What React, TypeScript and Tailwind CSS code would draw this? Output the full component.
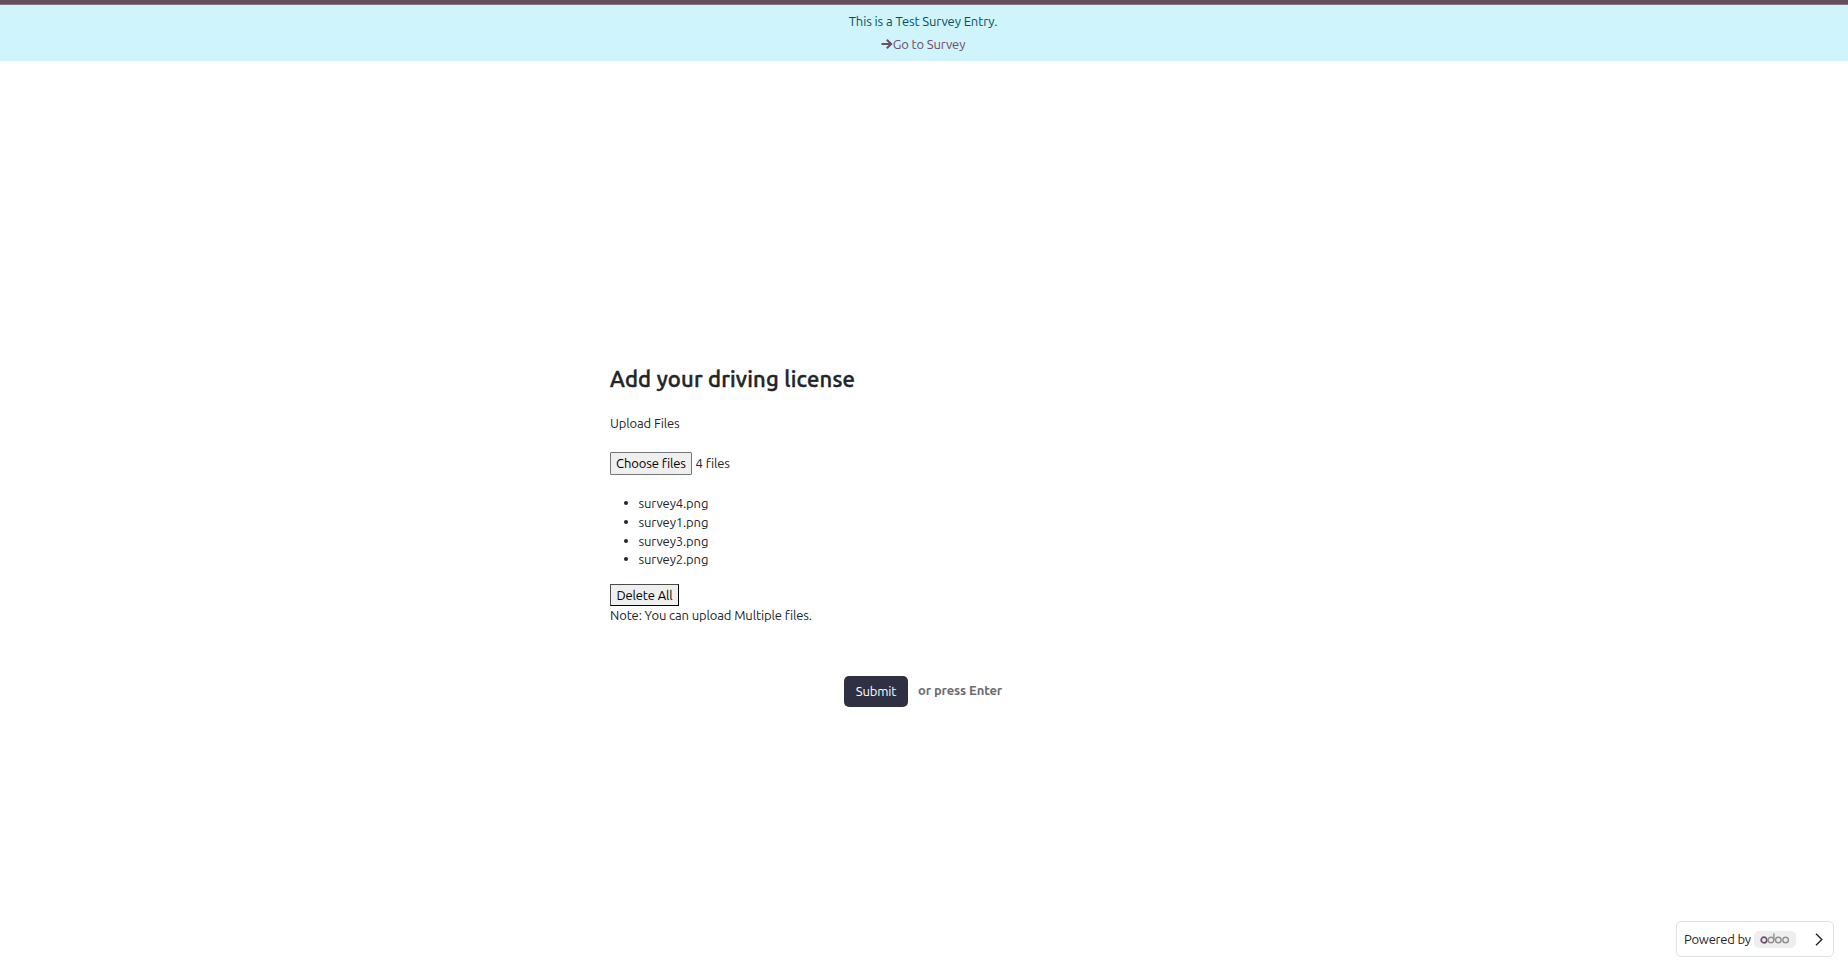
import React from "react";

const files = ["survey4.png", "survey1.png", "survey3.png", "survey2.png"];

function OdooLogo() {
  return (
    <svg width="30" height="11" viewBox="0 0 30 11" fill="none" strokeWidth="1.7">
      <circle cx="4" cy="7" r="2.8" stroke="#714b67" />
      <g stroke="#8f8f8f" strokeWidth="1.4">
        <circle cx="11" cy="7" r="2.8" />
        <path d="M13.9 0.5V7" />
        <circle cx="18.3" cy="7" r="2.8" />
        <circle cx="25.6" cy="7" r="2.8" />
      </g>
    </svg>
  );
}

export default function App() {
  return (
    <div className="flex h-[971px] w-[1848px] flex-col overflow-hidden bg-white font-['Ubuntu','Noto_Sans',sans-serif] text-[13px] leading-[18.75px] tracking-[-0.12px] text-[#212529]">
      <div className="h-[5px] shrink-0 border-b border-[#85747f] bg-[#644f5b]" />
      <header className="flex h-14 shrink-0 flex-col items-center bg-[#cff4fc] pr-[2px] pt-[7px] text-[#055160]">
        <p>This is a Test Survey Entry.</p>
        <a className="mt-1 flex items-center text-[#714b67]">
          <svg width="12" height="12" viewBox="0 0 12 12" fill="none" stroke="currentColor" strokeWidth="2">
            <path d="M0.5 6H10M5.8 1.7L10.2 6L5.8 10.3" />
          </svg>
          <span>Go to Survey</span>
        </a>
      </header>

      <main className="flex flex-1 flex-col items-start pl-[610px] pt-[303px]">
        <h1 className="text-[22px] font-medium leading-[30px] tracking-[0.2px] [-webkit-text-stroke:0.45px_#212529]">Add your driving license</h1>
        <p className="mt-5">Upload Files</p>
        <div className="mt-[19px] flex h-[23px] items-center gap-1">
          <button className="h-[23px] w-[82px] whitespace-nowrap rounded-[1px] border border-[#767676] bg-[#efefef] leading-[20px] text-black">Choose files</button>
          <span className="-ml-[0.4px]">4 files</span>
        </div>
        <ul className="mt-[19px] grid grid-rows-[19px_19px_18px_19px]">
          {files.map((file) => (
            <li key={file} className="flex h-[19px] items-center pl-[14px]">
              <span className="mr-[10.5px] size-1 rounded-full bg-[#212529]" />
              <span>{file}</span>
            </li>
          ))}
        </ul>
        <button className="mt-[15px] h-[22px] w-[69px] whitespace-nowrap border border-t-[#4c4c4c] border-r-black border-b-black border-l-[#4c4c4c] bg-[#efefef] leading-[20px] text-black">Delete All</button>
        <p>Note: You can upload Multiple files.</p>
        <div className="ml-[234px] mt-[51px] flex h-[31px] items-center gap-[10px]">
          <button className="h-[31px] w-16 rounded-[5px] bg-[#2f3143] text-white">Submit</button>
          <span className="-mt-[2px] font-bold text-[#6a6c6f]">or press Enter</span>
        </div>
      </main>

      <footer className="mb-[14px] mr-[14px] flex h-9 w-[158px] shrink-0 items-center self-end rounded-[5px] border border-[#dee2e6] pl-[7px]">
        <span className="w-[66px] whitespace-nowrap tracking-[-0.22px]">Powered by</span>
        <span className="ml-1 flex h-[17px] w-[42px] items-center justify-center rounded-[5px] bg-[#eeeeee] pb-[2px]">
          <OdooLogo />
        </span>
        <svg className="ml-[19px]" width="8" height="13" viewBox="0 0 8 13" fill="none" stroke="#212529" strokeWidth="1.4">
          <path d="M1 0.8L6.8 6.5L1 12.2" />
        </svg>
      </footer>
    </div>
  );
}
